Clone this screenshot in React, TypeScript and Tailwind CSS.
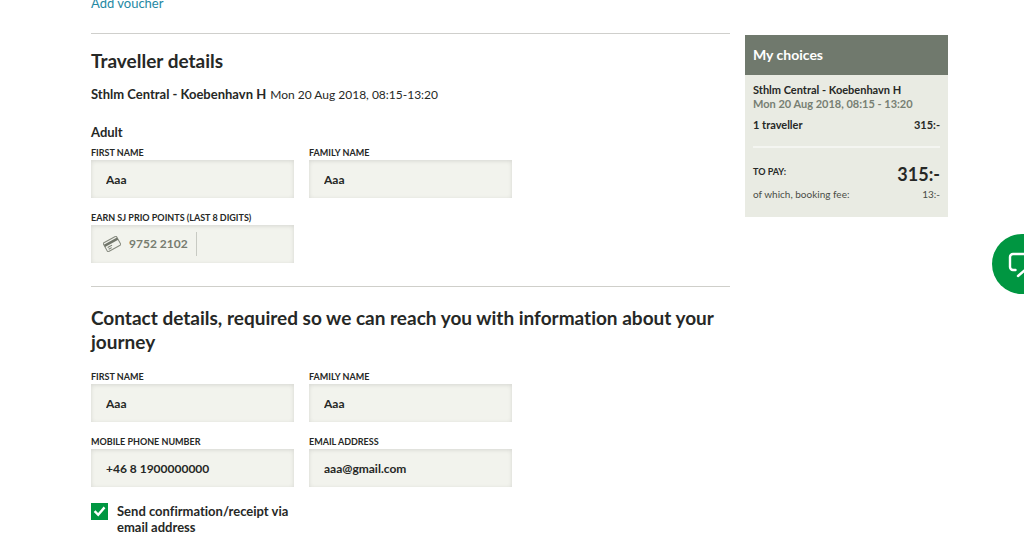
import { useState } from "react";

interface FieldProps {
  id: string;
  label: string;
  value: string;
  type?: string;
}

function Field({ id, label, value, type = "text" }: FieldProps) {
  return (
    <div className="flex flex-col">
      <label
        htmlFor={id}
        className="text-[9px] leading-[15px] font-bold uppercase"
      >
        {label}
      </label>
      <input
        id={id}
        type={type}
        defaultValue={value}
        className="h-[38px] w-full bg-[#f2f3ed] px-[15px] text-[12px] font-bold shadow-[inset_0_1px_4px_rgba(0,0,0,0.12)] outline-none"
      />
    </div>
  );
}

function CardIcon() {
  return (
    <svg viewBox="0 0 18 16" className="h-4 w-[18px] shrink-0" fill="none">
      <g transform="rotate(-29 9 8)">
        <rect x="1.5" y="3" width="15" height="10" rx="1" stroke="#85897e" />
        <path d="M1.5 6h15" stroke="#70756a" strokeWidth="2.6" />
        <path d="M3.5 9h5M3.5 11h3.5" stroke="#777c70" />
      </g>
    </svg>
  );
}

function PrioField() {
  return (
    <div className="flex flex-col">
      <label
        htmlFor="prio"
        className="text-[9px] leading-[15px] font-bold whitespace-nowrap uppercase"
      >
        Earn SJ Prio points (last 8 digits)
      </label>
      <div className="flex h-[38px] items-center bg-[#f2f3ed] pl-3 shadow-[inset_0_1px_4px_rgba(0,0,0,0.12)]">
        <CardIcon />
        <span className="ml-2 text-[12px] font-bold text-[#777c70]">
          9752 2102
        </span>
        <input
          id="prio"
          className="ml-2 h-6 min-w-0 flex-1 border-l border-[#c8cac3] bg-transparent px-2 text-[12px] font-bold outline-none"
        />
      </div>
    </div>
  );
}

function Summary() {
  return (
    <aside className="mt-[35px] self-start bg-[#e9ebe3]">
      <h2 className="bg-[#70796d] px-2 py-2 text-[14px] leading-6 font-bold text-white">
        My choices
      </h2>
      <div className="px-2 pt-2 pb-[15px] text-[11px]">
        <p className="leading-[14px] font-bold">Sthlm Central - Koebenhavn H</p>
        <p className="leading-[14px] font-bold text-[#777f73]">
          Mon 20 Aug 2018, 08:15 - 13:20
        </p>
        <div className="mt-1.5 flex justify-between leading-4 font-bold">
          <span>1 traveller</span>
          <span>315:-</span>
        </div>
        <hr className="mt-[13px] border-t-2 border-[#f4f5f1]" />
        <div className="mt-3.5 flex justify-between">
          <span className="text-[9px] leading-5 font-bold uppercase">
            To pay:
          </span>
          <span className="text-[18px] leading-6 font-bold">315:-</span>
        </div>
        <div className="flex justify-between text-[10px] leading-4 text-[#4a4d47]">
          <span>of which, booking fee:</span>
          <span>13:-</span>
        </div>
      </div>
    </aside>
  );
}

export default function App() {
  const [receipt, setReceipt] = useState(true);

  return (
    <div className="relative overflow-hidden bg-white pr-[76px] pl-[91px] font-['Lato',sans-serif] text-[#262826] [font-variant-ligatures:none]">
      <div className="grid grid-cols-4 gap-[15px]">
        <main className="col-span-3">
          <a
            href="#voucher"
            className="-mt-[7px] block text-[13px] leading-5 text-[#2488a3]"
          >
            Add voucher
          </a>

          <section className="mt-5 border-t border-[#cfcfcc] pt-[15px]">
            <h2 className="text-[19px] leading-6 font-bold">
              Traveller details
            </h2>
            <p className="mt-[11px] text-[12px] leading-5">
              <strong className="mr-1 text-[13px] font-bold">
                Sthlm Central - Koebenhavn H
              </strong>
              Mon 20 Aug 2018, 08:15-13:20
            </p>
            <h3 className="mt-[17px] text-[13px] leading-5 font-bold">Adult</h3>
            <div className="mt-[3px] grid grid-cols-3 gap-x-[15px] gap-y-3">
              <Field id="t-first" label="First name" value="Aaa" />
              <Field id="t-family" label="Family name" value="Aaa" />
              <div className="col-start-1">
                <PrioField />
              </div>
            </div>
          </section>

          <section className="mt-[23px] border-t border-[#cfcfca] pt-[19px] pb-3">
            <h2 className="text-[19px] leading-6 font-bold">
              Contact details, required so we can reach you with information
              about your journey
            </h2>
            <div className="mt-[15px] grid grid-cols-3 gap-x-[15px] gap-y-3">
              <Field id="c-first" label="First name" value="Aaa" />
              <Field id="c-family" label="Family name" value="Aaa" />
              <div className="col-start-1">
                <Field
                  id="phone"
                  label="Mobile phone number"
                  value="+46 8 1900000000"
                  type="tel"
                />
              </div>
              <Field
                id="email"
                label="Email address"
                value="aaa@gmail.com"
                type="email"
              />
              <label className="col-start-1 mt-1 flex items-start gap-[9px] text-[13px] leading-4 font-bold">
                <span className="grid shrink-0">
                  <input
                    type="checkbox"
                    checked={receipt}
                    onChange={(e) => setReceipt(e.target.checked)}
                    className="peer col-start-1 row-start-1 size-[17px] appearance-none border border-[#009641] bg-white checked:bg-[#009641]"
                  />
                  <svg
                    viewBox="0 0 17 17"
                    className="pointer-events-none invisible col-start-1 row-start-1 size-[17px] peer-checked:visible"
                    fill="none"
                    stroke="white"
                    strokeWidth="2.4"
                  >
                    <path d="M3.6 8.2l3.6 3.6 6.3-7.4" />
                  </svg>
                </span>
                Send confirmation/receipt via email address
              </label>
            </div>
          </section>
        </main>

        <Summary />
      </div>

      <button
        type="button"
        aria-label="Chat"
        className="absolute top-[234px] -right-7 size-[60px] rounded-full bg-[#009641]"
      >
        <svg
          viewBox="0 0 60 60"
          className="size-[60px]"
          fill="none"
          stroke="white"
          strokeWidth="2.4"
          strokeLinecap="round"
          strokeLinejoin="round"
        >
          <path d="M23.5 36h-2.5a3 3 0 0 1-3-3V23a3 3 0 0 1 3-3h19a3 3 0 0 1 3 3v10a3 3 0 0 1-3 3h-7L26 42" />
        </svg>
      </button>
    </div>
  );
}
